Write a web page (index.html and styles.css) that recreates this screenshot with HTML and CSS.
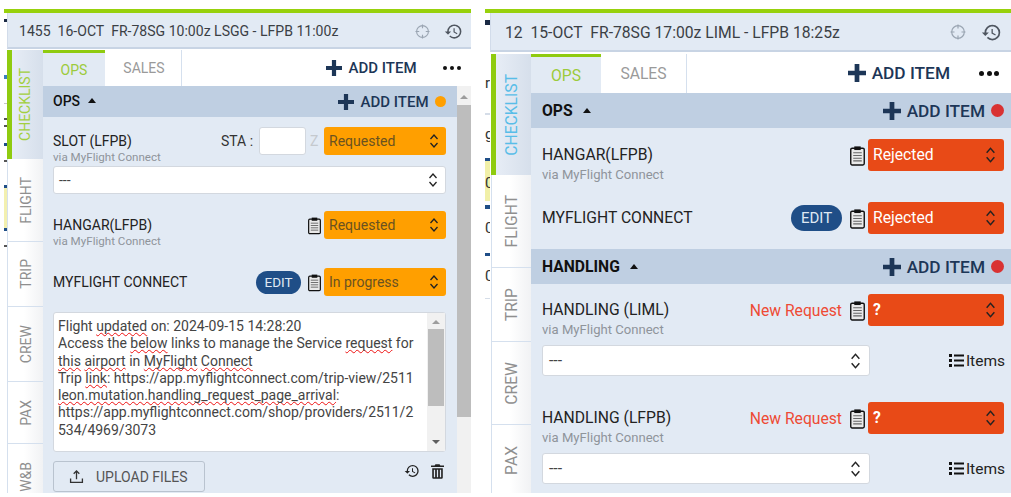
FILE: index.html
```html
<!DOCTYPE html>
<html lang="en">
<head>
<meta charset="utf-8">
<title>Checklist</title>
<link rel="stylesheet" href="styles.css">
</head>
<body>
<svg class="defs" aria-hidden="true">
  <symbol id="plus" viewBox="0 0 16 16"><path d="M5.900 0h4.200v5.900H16v4.200h-5.900V16H5.900v-5.900H0V5.900h5.900z"/></symbol>
  <symbol id="updown" viewBox="0 0 10 18"><path d="M1.500 7L5 3l3.500 4M1.500 11L5 15l3.500-4" fill="none" stroke="currentColor" stroke-width="1.300"/></symbol>
  <symbol id="history" viewBox="0 0 24 24"><path d="M13 3a9 9 0 0 0-9 9H1l3.890 3.890.070.140L9 12H6c0-3.870 3.130-7 7-7s7 3.130 7 7-3.130 7-7 7c-1.930 0-3.680-.790-4.940-2.060l-1.420 1.420A8.954 8.954 0 0 0 13 21a9 9 0 0 0 0-18zm-1 5v5l4.280 2.540.720-1.210-3.500-2.080V8H12z"/></symbol>
  <symbol id="target" viewBox="0 0 16 16"><g fill="none" stroke="currentColor" stroke-width="1.200"><circle cx="8" cy="8" r="6.300"/><path d="M8 .5v4M8 11.500v4M.5 8h4M11.500 8h4"/></g></symbol>
  <symbol id="clip" viewBox="0 0 14 19"><rect x=".7" y="2.700" width="12.600" height="15.600" rx="1.300" fill="#e9e9e9" stroke="#111" stroke-width="1.300"/><rect x="4" y="1" width="6" height="3.400" fill="#111"/><path d="M3 7h8M3 9.500h8M3 12h8M3 14.500h8" stroke="#666" stroke-width="1"/></symbol>
  <symbol id="trash" viewBox="0 0 16 18"><path d="M5.500 0h5l1 1.500H16v2H0v-2h4.500zM1.500 5h13v11.500a1.500 1.500 0 0 1-1.500 1.500H3a1.500 1.500 0 0 1-1.500-1.500zm2 1.800v9.400h1.600V6.800zm3.700 0v9.400h1.600V6.800zm3.700 0v9.400h1.600V6.800z"/></symbol>
  <symbol id="upload" viewBox="0 0 16 16"><path d="M8 1L4.500 4.500l1 1L7.300 3.700V11h1.400V3.700l1.800 1.800 1-1zM1 10v5h14v-5h-1.400v3.600H2.400V10z"/></symbol>
  <symbol id="list" viewBox="0 0 15 15"><path d="M0 1h3v3H0zM0 6h3v3H0zM0 11h3v3H0zM5 1.500h10v2H5zM5 6.500h10v2H5zM5 11.500h10v2H5z"/></symbol>
</svg>

<main class="page">
  <!-- LEFT PANEL -->
  <section class="panel panel-a">
    <div class="greenline"></div>
    <div class="panel-row">
      <div class="sliver sliver-a"></div>
      <div class="content">
        <header class="topbar">
          <span class="flight">1455&nbsp; 16-OCT&nbsp; FR-78SG 10:00z LSGG - LFPB 11:00z</span>
          <span class="tools">
            <svg class="tool tool-target"><use href="#target"/></svg>
            <svg class="tool tool-history"><use href="#history"/></svg>
          </span>
        </header>
        <div class="body">
          <nav class="side">
            <div class="vtab vtab-active a1"><span>CHECKLIST</span></div>
            <div class="vtab a2"><span>FLIGHT</span></div>
            <div class="vtab a3"><span>TRIP</span></div>
            <div class="vtab a4"><span>CREW</span></div>
            <div class="vtab a5"><span>PAX</span></div>
            <div class="vtab vtab-rest"><span>W&amp;B</span></div>
          </nav>
          <div class="main">
            <div class="tabs">
              <div class="tab tab-active tab-ops">OPS</div>
              <div class="tab tab-sales">SALES</div>
              <div class="add add-top"><svg class="plus"><use href="#plus"/></svg>ADD ITEM</div>
              <div class="more"><i></i><i></i><i></i></div>
            </div>
            <div class="scroller">
              <div class="scroll-main">
                <div class="section">
                  <span class="sec-title">OPS <b class="caret"></b></span>
                  <div class="add"><svg class="plus"><use href="#plus"/></svg>ADD ITEM</div>
                  <b class="dot dot-orange"></b>
                </div>

                <div class="row mt-10">
                  <div class="label"><div class="title">SLOT (LFPB)</div><div class="via">via MyFlight Connect</div></div>
                  <span class="sta">STA :</span>
                  <span class="sta-input"></span>
                  <span class="zulu">Z</span>
                  <div class="select status status-orange"><span>Requested</span><svg class="chev"><use href="#updown"/></svg></div>
                </div>
                <div class="select full mt-11"><span>---</span><svg class="chev"><use href="#updown"/></svg></div>

                <div class="row mt-17">
                  <div class="label"><div class="title">HANGAR(LFPB)</div><div class="via">via MyFlight Connect</div></div>
                  <svg class="clip"><use href="#clip"/></svg>
                  <div class="select status status-orange"><span>Requested</span><svg class="chev"><use href="#updown"/></svg></div>
                </div>

                <div class="row mt-29">
                  <div class="label"><div class="title">MYFLIGHT CONNECT</div></div>
                  <span class="edit">EDIT</span>
                  <svg class="clip"><use href="#clip"/></svg>
                  <div class="select status status-orange"><span>In progress</span><svg class="chev"><use href="#updown"/></svg></div>
                </div>

                <div class="note mt-16">
                  <div class="note-text">Flight <u>updated</u> on: 2024-09-15 14:28:20<br>Access the <u>below</u> links to manage the Service <u>request</u> for<br><u>this</u> <u>airport</u> in <u>MyFlight</u> <u>Connect</u><br>Trip <u>link</u>: https://app.myflightconnect.com/trip-view/2511<br><u>leon.mutation.handling_request_page_arrival</u>:<br>https://app.myflightconnect.com/shop/providers/2511/2<br>534/4969/3073</div>
                  <div class="note-bar">
                    <b class="arrow-up"></b>
                    <b class="note-thumb"></b>
                    <b class="arrow-down"></b>
                  </div>
                </div>

                <div class="actions mt-9">
                  <div class="upload"><svg class="upload-icon"><use href="#upload"/></svg>UPLOAD FILES</div>
                  <div class="action-icons">
                    <svg class="hist-small"><use href="#history"/></svg>
                    <svg class="trash"><use href="#trash"/></svg>
                  </div>
                </div>
              </div>
              <div class="page-bar">
                <b class="arrow-up"></b>
                <b class="page-thumb"></b>
              </div>
            </div>
          </div>
        </div>
      </div>
    </div>
  </section>

  <!-- RIGHT PANEL -->
  <section class="panel panel-b">
    <div class="greenline"></div>
    <div class="panel-row">
      <div class="sliver sliver-b">
        <span class="bg-r">r</span>
        <span class="bg-g">g</span>
        <span class="bg-0 first">0</span>
        <span class="bg-0 second">0</span>
        <span class="bg-0 third">0</span>
      </div>
      <div class="content">
        <header class="topbar">
          <span class="flight">12&nbsp; 15-OCT&nbsp; FR-78SG 17:00z LIML - LFPB 18:25z</span>
          <span class="tools">
            <svg class="tool tool-target"><use href="#target"/></svg>
            <svg class="tool tool-history"><use href="#history"/></svg>
          </span>
        </header>
        <div class="body">
          <nav class="side">
            <div class="vtab vtab-active b1"><span>CHECKLIST</span></div>
            <div class="vtab b2"><span>FLIGHT</span></div>
            <div class="vtab b3"><span>TRIP</span></div>
            <div class="vtab b4"><span>CREW</span></div>
            <div class="vtab vtab-rest"><span>PAX</span></div>
          </nav>
          <div class="main">
            <div class="tabs">
              <div class="tab tab-active tab-ops">OPS</div>
              <div class="tab tab-sales">SALES</div>
              <div class="add add-top"><svg class="plus"><use href="#plus"/></svg>ADD ITEM</div>
              <div class="more"><i></i><i></i><i></i></div>
            </div>
            <div class="scroller">
              <div class="scroll-main">
                <div class="section">
                  <span class="sec-title">OPS <b class="caret"></b></span>
                  <div class="add"><svg class="plus"><use href="#plus"/></svg>ADD ITEM</div>
                  <b class="dot dot-red"></b>
                </div>

                <div class="row mt-11">
                  <div class="label"><div class="title">HANGAR(LFPB)</div><div class="via">via MyFlight Connect</div></div>
                  <svg class="clip"><use href="#clip"/></svg>
                  <div class="select status status-red"><span>Rejected</span><svg class="chev"><use href="#updown"/></svg></div>
                </div>

                <div class="row mt-31">
                  <div class="label"><div class="title">MYFLIGHT CONNECT</div></div>
                  <span class="edit">EDIT</span>
                  <svg class="clip"><use href="#clip"/></svg>
                  <div class="select status status-red"><span>Rejected</span><svg class="chev"><use href="#updown"/></svg></div>
                </div>

                <div class="section mt-15">
                  <span class="sec-title">HANDLING <b class="caret"></b></span>
                  <div class="add"><svg class="plus"><use href="#plus"/></svg>ADD ITEM</div>
                  <b class="dot dot-red"></b>
                </div>

                <div class="row mt-10">
                  <div class="label"><div class="title">HANDLING (LIML)</div><div class="via">via MyFlight Connect</div></div>
                  <span class="new-request">New Request</span>
                  <svg class="clip"><use href="#clip"/></svg>
                  <div class="select status status-red"><span class="q">?</span><svg class="chev"><use href="#updown"/></svg></div>
                </div>
                <div class="items-row mt-19">
                  <div class="select wide"><span>---</span><svg class="chev"><use href="#updown"/></svg></div>
                  <div class="items"><svg class="list"><use href="#list"/></svg>Items</div>
                </div>

                <div class="row mt-26">
                  <div class="label"><div class="title">HANDLING (LFPB)</div><div class="via">via MyFlight Connect</div></div>
                  <span class="new-request">New Request</span>
                  <svg class="clip"><use href="#clip"/></svg>
                  <div class="select status status-red"><span class="q">?</span><svg class="chev"><use href="#updown"/></svg></div>
                </div>
                <div class="items-row mt-19">
                  <div class="select wide"><span>---</span><svg class="chev"><use href="#updown"/></svg></div>
                  <div class="items"><svg class="list"><use href="#list"/></svg>Items</div>
                </div>
              </div>
            </div>
          </div>
        </div>
      </div>
    </div>
  </section>
</main>
</body>
</html>
```

FILE: styles.css
```css
* { box-sizing: border-box; }
html, body { margin: 0; padding: 0; background: #fff; }
body { font-family: Roboto, "Liberation Sans", sans-serif; color: #222; overflow: hidden; }
.defs { width: 0; height: 0; position: absolute; }
svg { display: block; flex: none; fill: currentColor; }

.page { display: flex; align-items: flex-start; width: 1011px; height: 497px; padding-top: 9px; overflow: hidden; }
.panel { display: flex; flex-direction: column; height: 484px; overflow: hidden; }

/* sizes per panel */
.panel-a {
  --fs: 14px; --fs-via: 11.6px; --fs-add: 15px; --row: 28px; --plus: 16px; --clip-w: 13px; --clip-h: 19px;
  --pad-l: 10px; --pad-r: 11px;
  margin-left: 4px; width: 467px;
}
.panel-b {
  --fs: 15.7px; --fs-via: 13.1px; --fs-add: 17.3px; --row: 32px; --plus: 18px; --clip-w: 15px; --clip-h: 21px;
  --pad-l: 11px; --pad-r: 7px;
  margin-left: 14px; width: 526px;
}

.greenline { height: 3.5px; background: #97d10c; flex: none; }
.panel-row { display: flex; flex: 1; min-height: 0; }
.content { flex: 1; min-width: 0; display: flex; flex-direction: column; }

/* slivers of the app behind */
.sliver { flex: none; position: relative; overflow: hidden; font-size: 15px; }
.sliver-a {
  width: 3px;
  background: linear-gradient(to bottom, #fff 6px, #1b2a44 6px 9px, #fff 9px 62px, #3b7fc0 62px 66px, #fff 66px 90px, #c5c5c5 90px 91px, #fff 91px 105px, #555 105px 107px, #fff 107px 112px, #555 112px 114px, #fff 114px 130px, #1f4e87 130px 133px, #fff 133px 147px, #555 147px 149px, #fff 149px 172px, #1f4e87 172px 175px, #f3f0b0 175px 215px, #1f4e87 215px 218px, #fff 218px 232px, #555 232px 234px, #fff 234px);
}
.sliver-b {
  width: 5px;
  background: linear-gradient(to bottom, #fff 7px, #1b2a44 7px 12px, #fff 12px 100px, #d5dde8 100px 102px, #fff 102px 145px, #1f4e87 145px 148px, #f1f0a8 148px 188px, #fff 188px 192px, #1f4e87 192px 196px, #fff 196px 240px, #1f4e87 240px 243px, #fff 243px 285px, #d5dde8 285px 286px, #fff 286px);
}
.sliver-b span { position: absolute; left: 0; line-height: 16px; color: #333; }
.bg-r { top: 62px; }
.bg-g { top: 113px; }
.bg-0.first { top: 162px; }
.bg-0.second { top: 207px; }
.bg-0.third { top: 255px; }

/* top bar */
.topbar { flex: none; display: flex; align-items: center; background: #e2eaf4; border-left: 1px solid #d2dcea; border-bottom: 2px solid #c8d4e4; color: #3b4045; }
.panel-a .topbar { height: 36.5px; padding: 3px 8px 0 11px; font-size: 14.05px; }
.panel-b .topbar { height: 39.5px; padding: 2px 9px 0 14px; font-size: 15.7px; }
.flight { flex: 1; white-space: nowrap; }
.tools { display: flex; align-items: center; }
.tool-target { color: #9aa5b2; width: 15px; height: 15px; }
.tool-history { color: #4f5660; width: 19px; height: 19px; margin-left: 14px; }
.panel-b .tool-target { width: 16px; height: 16px; }
.panel-b .tool-history { width: 21px; height: 21px; margin-left: 15px; }

/* body */
.body { flex: 1; display: flex; min-height: 0; }
.panel-a .body { margin-top: 1px; }
.panel-b .body { margin-top: 2px; }
.side { flex: none; display: flex; flex-direction: column; }
.panel-a .side { width: 36px; }
.panel-b .side { width: 40px; margin-left: 1px; }
.vtab { display: flex; align-items: center; justify-content: center; background: linear-gradient(to right, #fff 45%, #f1f2f4); border-bottom: 1px solid #d5e0ee; border-left: 1px solid #d5e0ee; color: #8f8f8f; }
.vtab span { writing-mode: vertical-rl; transform: rotate(180deg); white-space: nowrap; }
.panel-a .vtab { font-size: 14px; }
.panel-b .vtab { font-size: 15.7px; }
.vtab-active { border-left: 5px solid #8fcb10; border-bottom: 0; background: linear-gradient(to right, #e7edf6, #d6dfeb); }
.panel-a .vtab-active { color: #a3cf3e; padding-right: 5px; }
.panel-b .vtab-active { color: #58bde8; padding-right: 4px; }
.vtab-rest { flex: 1; border-bottom: 0; }
.panel-a .vtab-rest { align-items: flex-start; padding-top: 18px; }
.panel-b .vtab-rest { align-items: flex-start; padding-top: 21px; }
.a1 { height: 109px; } .a2 { height: 83px; } .a3 { height: 65px; } .a4 { height: 75px; } .a5 { height: 62px; }
.b1 { height: 121px; } .b2 { height: 93px; } .b3 { height: 74px; } .b4 { height: 83px; }

.main { flex: 1; min-width: 0; display: flex; flex-direction: column; }
.tabs { flex: none; display: flex; align-items: center; background: #fff; }
.panel-a .tabs { height: 36px; }
.panel-b .tabs { height: 39px; }
.tab { height: 100%; display: flex; align-items: center; justify-content: center; border-right: 1px solid #d5e0ee; color: #9a9a9a; }
.panel-a .tab { font-size: 14px; }
.panel-b .tab { font-size: 15.7px; }
.tab-active { background: #e2eaf4; color: #9ccb3b; border-top: 3.5px solid #8fcb10; border-right: 0; }
.panel-a .tab-ops { width: 62px; }
.panel-a .tab-sales { width: 77px; padding-left: 2px; }
.panel-b .tab-ops { width: 70px; }
.panel-b .tab-sales { width: 86px; }

.add { display: flex; align-items: center; font-size: var(--fs-add); font-weight: 500; color: #1d3657; margin-left: auto; white-space: nowrap; }
.plus { width: var(--plus); height: var(--plus); margin-right: 6px; color: #1d3657; }
.more { display: flex; flex: none; gap: 2.5px; }
.more i { width: 4.5px; height: 4.5px; border-radius: 50%; background: #111; }
.panel-a .add-top { margin-right: 26px; }
.panel-a .more { margin-right: 10px; }
.panel-b .add-top { margin-right: 29px; padding-bottom: 1px; }
.panel-b .more { margin-right: 12px; }
.panel-b .more i { width: 5px; height: 5px; }

.scroller { flex: 1; display: flex; min-height: 0; background: #e2eaf4; }
.scroll-main { flex: 1; min-width: 0; }
.page-bar { flex: none; width: 14px; background: #f1f1f1; display: flex; flex-direction: column; align-items: center; padding-top: 9px; }
.page-thumb { width: 14px; height: 312px; margin-top: 6px; background: #bdbdbd; }
.arrow-up { width: 0; height: 0; border: 4px solid transparent; border-top: 0; border-bottom: 4px solid #9d9d9d; flex: none; }
.arrow-down { width: 0; height: 0; border: 4px solid transparent; border-bottom: 0; border-top: 4px solid #5f5f5f; flex: none; }

.section { display: flex; align-items: center; background: #bfcfe2; padding: 0 var(--pad-r) 0 var(--pad-l); }
.panel-a .section { height: 31px; }
.panel-b .section { height: 35px; }
.section .add { padding-top: 1px; }
.sec-title { display: flex; align-items: center; font-size: var(--fs); font-weight: 700; color: #111; white-space: pre; padding-bottom: 1px; }
.panel-a .sec-title { font-weight: 500; padding-bottom: 2px; }
.caret { width: 0; height: 0; margin-left: 4px; border: 4.5px solid transparent; border-top: 0; border-bottom: 5px solid #111; }
.panel-b .caret { margin-left: 6px; }
.dot { width: 11.5px; height: 11.5px; border-radius: 50%; margin-left: 6px; flex: none; }
.panel-b .dot { width: 13px; height: 13px; }
.dot-orange { background: #ff9f00; }
.dot-red { background: #d93232; }

.mt-9 { margin-top: 9px; } .mt-10 { margin-top: 10px; } .mt-11 { margin-top: 11px; } .mt-15 { margin-top: 15px; }
.mt-16 { margin-top: 16px; } .mt-17 { margin-top: 17px; } .mt-19 { margin-top: 19px; }
.mt-26 { margin-top: 26px; } .mt-29 { margin-top: 29px; } .mt-31 { margin-top: 31px; }

.row { display: flex; align-items: center; height: var(--row); margin-left: var(--pad-l); margin-right: var(--pad-r); }
.label { flex: 1; height: var(--row); min-width: 0; }
.title { font-size: var(--fs); line-height: var(--row); color: #222; white-space: nowrap; }
.via { font-size: var(--fs-via); line-height: 14px; color: #8f949b; margin-top: -5px; white-space: nowrap; }
.panel-b .via { margin-top: -3px; }

.select { display: flex; align-items: center; justify-content: space-between; background: #fff; border-radius: 3px; border: 1px solid #d3d8df; height: var(--row); padding: 0 7px 0 5px; font-size: 14px; color: #444; }
.panel-b .select { font-size: 15.7px; padding-right: 8px; }
.status span { padding-bottom: 1px; }
.panel-b .status span { padding-bottom: 2px; }
.chev { width: 10px; height: 18px; color: #222; }
.panel-b .chev { width: 11px; height: 20px; }
.status { border: 0; width: 122px; flex: none; }
.panel-b .status { width: 136px; }
.status-orange { background: #ff9f00; color: #6a5220; }
.status-red { background: #e84a17; color: #fff; }
.q { font-weight: 700; }
.full { margin-left: var(--pad-l); margin-right: var(--pad-r); }
.wide { width: 328px; flex: none; padding-left: 6px; }

.sta { font-size: 14px; margin-right: 6px; color: #333; }
.sta-input { width: 47px; height: 28px; background: #fff; border: 1px solid #d3d8df; border-radius: 3px; }
.zulu { font-size: 14px; color: #c5c9ce; margin: 0 5.5px 0 4px; }

.clip { width: var(--clip-w); height: var(--clip-h); margin-right: 3px; }
.edit { height: 23px; width: 45px; border-radius: 12px; background: #1f4e87; color: #dfe8f3; display: flex; align-items: center; justify-content: center; font-size: 13.5px; margin-right: 7px; }
.panel-b .edit { height: 26px; width: 51px; border-radius: 13px; font-size: 15px; margin-right: 8px; }
.new-request { color: #ee4a35; font-size: 15.7px; margin-right: 8px; white-space: nowrap; }

.note { display: flex; height: 140px; margin-left: var(--pad-l); margin-right: var(--pad-r); background: #fff; border: 1px solid #d3d8df; border-radius: 3px; }
.note-text { flex: 1; padding: 5px 0 0 4px; font-size: 14px; line-height: 17.3px; color: #444; white-space: nowrap; overflow: hidden; }
.note-text u { text-decoration: underline wavy #e11; text-decoration-thickness: 1px; text-decoration-skip-ink: none; text-underline-offset: 1px; }
.note-bar { flex: none; width: 18px; background: #f1f1f1; display: flex; flex-direction: column; align-items: center; padding-top: 7px; padding-bottom: 7px; }
.note-thumb { width: 16px; height: 77px; margin-top: 5px; margin-bottom: auto; background: #bdbdbd; }

.actions { display: flex; justify-content: space-between; align-items: flex-start; margin-left: var(--pad-l); margin-right: var(--pad-r); }
.upload { display: flex; align-items: center; width: 152px; height: 31px; padding-left: 15px; border: 1px solid #b9c3cf; border-radius: 3px; background: #e2eaf4; font-size: 14px; color: #555; }
.upload-icon { width: 15px; height: 15px; margin-right: 12px; color: #333; }
.action-icons { display: flex; align-items: center; padding: 2px 2px 0 0; gap: 11px; }
.hist-small { width: 16px; height: 16px; color: #222; }
.trash { width: 13px; height: 15px; color: #222; }

.items-row { display: flex; align-items: center; justify-content: space-between; margin-left: var(--pad-l); margin-right: var(--pad-r); }
.items-row .select { height: 31px; }
.items { display: flex; align-items: center; font-size: 15.5px; color: #222; margin-right: -1px; }
.list { width: 15px; height: 15px; margin-right: 2px; color: #111; }
```
